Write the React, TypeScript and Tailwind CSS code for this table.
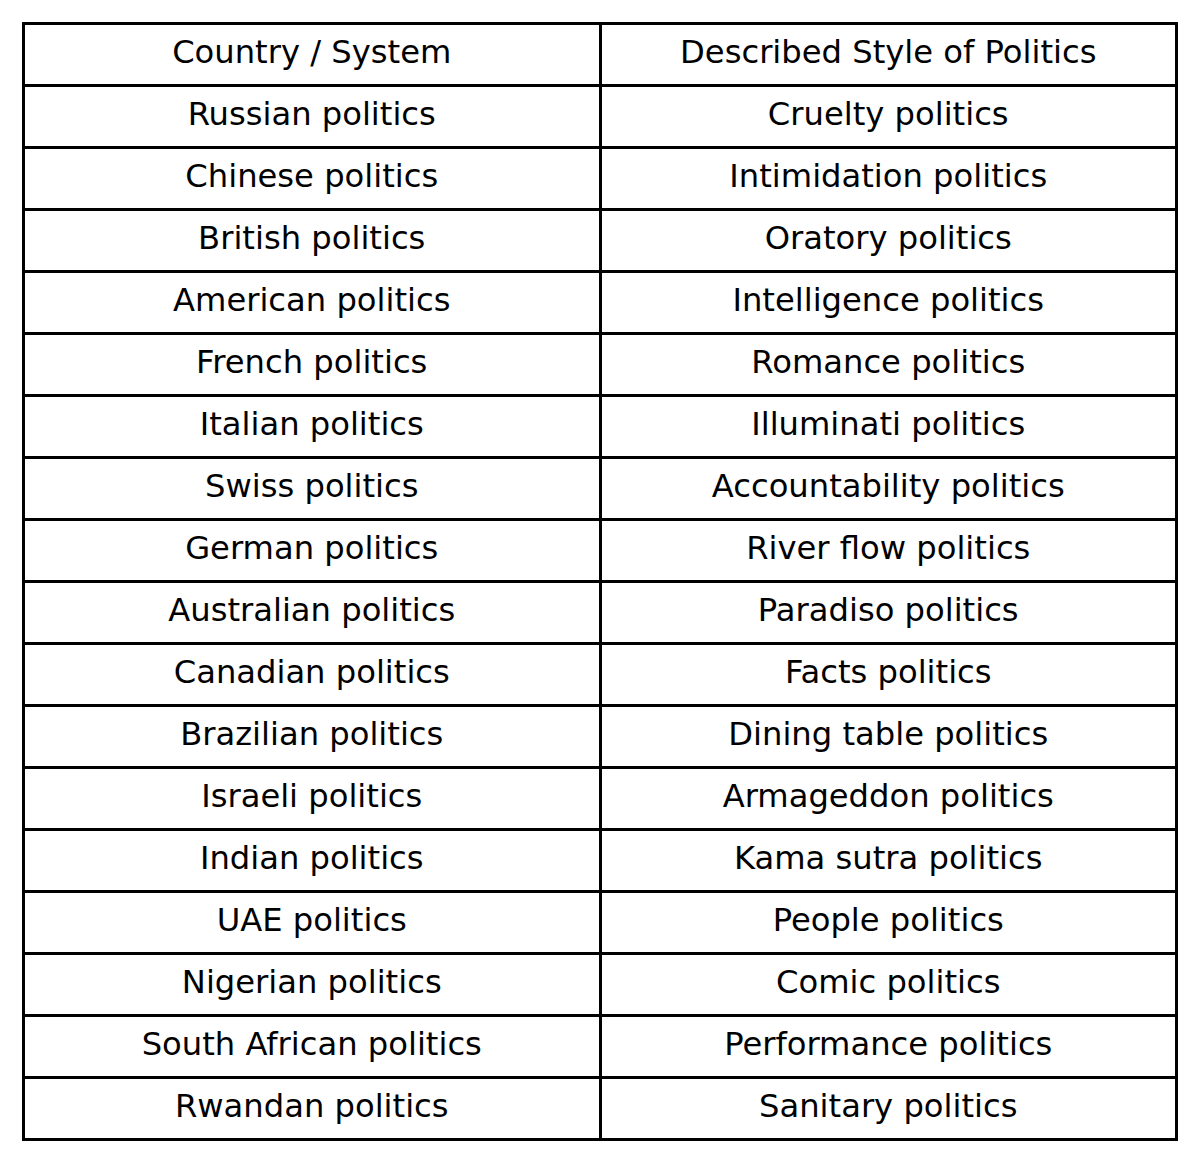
const rows = [
  ["Russian politics", "Cruelty politics"],
  ["Chinese politics", "Intimidation politics"],
  ["British politics", "Oratory politics"],
  ["American politics", "Intelligence politics"],
  ["French politics", "Romance politics"],
  ["Italian politics", "Illuminati politics"],
  ["Swiss politics", "Accountability politics"],
  ["German politics", "River flow politics"],
  ["Australian politics", "Paradiso politics"],
  ["Canadian politics", "Facts politics"],
  ["Brazilian politics", "Dining table politics"],
  ["Israeli politics", "Armageddon politics"],
  ["Indian politics", "Kama sutra politics"],
  ["UAE politics", "People politics"],
  ["Nigerian politics", "Comic politics"],
  ["South African politics", "Performance politics"],
  ["Rwandan politics", "Sanitary politics"],
];

const cell = "border-[3px] border-black h-[62px] p-0 pb-[5px] text-center align-middle w-1/2";

export default function App() {
  return (
    <div className="bg-white min-h-[1162px] pt-[22px] font-['DejaVu_Sans',sans-serif] text-[32.2px] leading-none text-black">
      <table className="mx-auto w-[1156px] border-collapse table-fixed">
        <tbody>
          <tr>
            <td className={cell}>Country / System</td>
            <td className={cell}>Described Style of Politics</td>
          </tr>
          {rows.map(([country, style]) => (
            <tr key={country}>
              <td className={cell}>{country}</td>
              <td className={cell}>{style}</td>
            </tr>
          ))}
        </tbody>
      </table>
    </div>
  );
}
